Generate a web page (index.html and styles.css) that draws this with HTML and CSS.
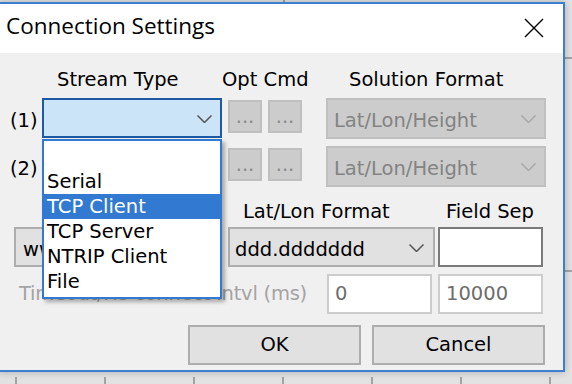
FILE: index.html
```html
<!DOCTYPE html>
<html lang="en">

<head>
    <meta charset="UTF-8">
    <meta name="viewport" content="width=device-width, initial-scale=1.0">
    <title>Connection Settings</title>
    <link rel="stylesheet" href="styles.css">
</head>

<body>
    <div class="window">
        <div class="titlebar">
            <span class="title">Connection Settings</span>
            <svg class="close" width="20" height="20" viewBox="0 0 20 20">
                <path d="M1 1 L19 19 M19 1 L1 19" stroke="#000" stroke-width="1.4" fill="none" />
            </svg>
        </div>

        <div class="streams">
            <span></span>
            <span class="head head-type">Stream Type</span>
            <span class="head head-opt">Opt Cmd</span>
            <span class="head head-fmt">Solution Format</span>

            <span class="num">(1)</span>
            <div class="combo combo-focus">
                <span class="val"></span>
                <svg class="chev" width="15" height="8" viewBox="0 0 15 8"><polyline points="0.5,0.5 7.5,7.5 14.5,0.5" /></svg>
            </div>
            <button class="dots" disabled>...</button>
            <button class="dots" disabled>...</button>
            <div class="combo combo-off">
                <span class="val">Lat/Lon/Height</span>
                <svg class="chev" width="15" height="8" viewBox="0 0 15 8"><polyline points="0.5,0.5 7.5,7.5 14.5,0.5" /></svg>
            </div>

            <span class="num">(2)</span>
            <div class="combo">
                <span class="val"></span>
                <svg class="chev" width="15" height="8" viewBox="0 0 15 8"><polyline points="0.5,0.5 7.5,7.5 14.5,0.5" /></svg>
            </div>
            <button class="dots" disabled>...</button>
            <button class="dots" disabled>...</button>
            <div class="combo combo-off">
                <span class="val">Lat/Lon/Height</span>
                <svg class="chev" width="15" height="8" viewBox="0 0 15 8"><polyline points="0.5,0.5 7.5,7.5 14.5,0.5" /></svg>
            </div>
        </div>

        <div class="options">
            <span></span>
            <span class="head head-latlon">Lat/Lon Format</span>
            <span class="head head-sep">Field Sep</span>

            <div class="combo combo-proxy">
                <span class="val">www</span>
            </div>
            <div class="combo combo-deg">
                <span class="val">ddd.ddddddd</span>
                <svg class="chev" width="15" height="8" viewBox="0 0 15 8"><polyline points="0.5,0.5 7.5,7.5 14.5,0.5" /></svg>
            </div>
            <div class="edit edit-sep"></div>
        </div>

        <div class="timeout-row">
            <span class="label-off">Timeout/Re-connect Intvl (ms)</span>
            <div class="edit edit-off">0</div>
            <div class="edit edit-off">10000</div>
        </div>

        <div class="actions">
            <button class="btn">OK</button>
            <button class="btn">Cancel</button>
        </div>

        <ul class="dropdown">
            <li></li>
            <li>Serial</li>
            <li class="selected">TCP Client</li>
            <li>TCP Server</li>
            <li>NTRIP Client</li>
            <li>File</li>
        </ul>
    </div>
</body>

</html>
```
FILE: styles.css
```css
html,
body {
    margin: 0;
    height: 100%;
    overflow: hidden;
}

body {
    font-family: "DejaVu Sans", sans-serif;
    font-size: 19.5px;
    line-height: 22px;
    color: #000;
    padding-top: 2px;
    box-sizing: border-box;
    background-color: #e2e2e2;
    background-image:
        repeating-linear-gradient(to right, transparent 0 15px, #a4a4a4 15px 17px, transparent 17px 89px),
        linear-gradient(#a4a4a4, #a4a4a4),
        linear-gradient(#a4a4a4, #a4a4a4),
        linear-gradient(#a4a4a4, #a4a4a4);
    background-size: 100% 7px, 2px 2px, 8px 2px, 8px 2px;
    background-position: 0 100%, 283px 0, 100% 57px, 100% 270px;
    background-repeat: no-repeat;
}

.window {
    position: relative;
    width: 567px;
    height: 370px;
    margin-left: -2px;
    box-sizing: border-box;
    border: 2px solid #3b7fd1;
    background-color: #f0f0f0;
    box-shadow: 0 0 7px rgba(0, 0, 0, 0.25);
}

.titlebar {
    display: flex;
    height: 49px;
    background-color: #fff;
}

.title {
    font-family: "Open Sans", sans-serif;
    font-size: 22.5px;
    line-height: 30px;
    padding: 7px 0 0 6px;
}

.close {
    margin: 14px 19px 0 auto;
}

/* stream rows */
.streams {
    display: grid;
    grid-template-columns: 42px 186px 40px 58px 220px;
    grid-template-rows: 29px 48px 41px;
    align-items: start;
    padding-top: 16px;
}

.head {
    white-space: nowrap;
}

.head-type {
    padding-left: 15px;
}

.head-opt {
    grid-column: 3 / 5;
    margin-left: -6px;
}

.head-fmt {
    padding-left: 23px;
}

.num {
    display: flex;
    align-items: center;
    height: 40px;
    padding: 5px 0 0 10px;
    box-sizing: border-box;
}

.combo {
    display: flex;
    align-items: center;
    width: 180px;
    height: 40px;
    box-sizing: border-box;
    padding: 5px 8px 0 6px;
    border: 2px solid #adadad;
    background-color: #e1e1e1;
    overflow: hidden;
}

.streams .combo-off {
    width: 220px;
    height: 41px;
}

.combo .val {
    flex: 1;
    white-space: nowrap;
    overflow: hidden;
}

.chev {
    flex: none;
    margin-top: -4px;
    fill: none;
    stroke: #555;
    stroke-width: 1.5;
}

.combo-focus {
    border-color: #1d5aa3;
    background-color: #cce4f7;
}

.combo-off {
    border-color: #bfbfbf;
    background-color: #cccccc;
    color: #838383;
}

.combo-off .chev {
    stroke: #a8a8a8;
}

.dots {
    width: 34px;
    height: 33px;
    margin-top: 2px;
    padding: 0;
    border: 2px solid #bfbfbf;
    background-color: #cccccc;
    color: #8a8a8a;
    font-family: inherit;
    font-size: inherit;
    line-height: 22px;
}

/* format rows */
.options {
    display: grid;
    grid-template-columns: 214px 210px 105px;
    grid-template-rows: 26px 40px;
    padding-left: 14px;
    margin-top: 14px;
}

.head-latlon {
    padding-left: 15px;
}

.head-sep {
    padding-left: 8px;
}

.combo-proxy {
    width: 208px;
    padding-left: 7px;
}

.combo-proxy .val {
    flex: none;
    width: 21px;
}

.combo-deg {
    width: 207px;
    padding-left: 5px;
    padding-right: 9px;
}

.edit {
    height: 40px;
    width: 105px;
    box-sizing: border-box;
    display: flex;
    align-items: center;
    padding-left: 6px;
    background-color: #fff;
    border: 2px solid #cccccc;
}

.edit-sep {
    border-color: #7a7a7a;
}

.timeout-row {
    display: flex;
    align-items: center;
    gap: 6px;
    margin-top: 7px;
    padding: 0 20px 0 19px;
}

.label-off {
    flex: 1;
    color: #a3a3a3;
    white-space: nowrap;
    letter-spacing: -0.25px;
}

.edit-off {
    color: #6d6d6d;
}

.actions {
    display: flex;
    justify-content: flex-end;
    gap: 11px;
    margin-top: 11px;
    padding-right: 18px;
}

.btn {
    width: 173px;
    height: 40px;
    padding: 0;
    border: 2px solid #adadad;
    background-color: #e1e1e1;
    color: #000;
    font-family: inherit;
    font-size: inherit;
    line-height: 22px;
}

/* open list of the first stream type box */
.dropdown {
    position: absolute;
    left: 42px;
    top: 135px;
    width: 180px;
    height: 160px;
    box-sizing: border-box;
    margin: 0;
    padding: 3px 0 0;
    list-style: none;
    background-color: #fff;
    border: 2px solid #3279d1;
    box-shadow: 3px 3px 4px rgba(0, 0, 0, 0.3);
}

.dropdown li {
    display: flex;
    align-items: center;
    height: 25px;
    margin: 0 -2px;
    padding-left: 5px;
}

.dropdown .selected {
    background-color: #3279d1;
    color: #fff;
}
```
